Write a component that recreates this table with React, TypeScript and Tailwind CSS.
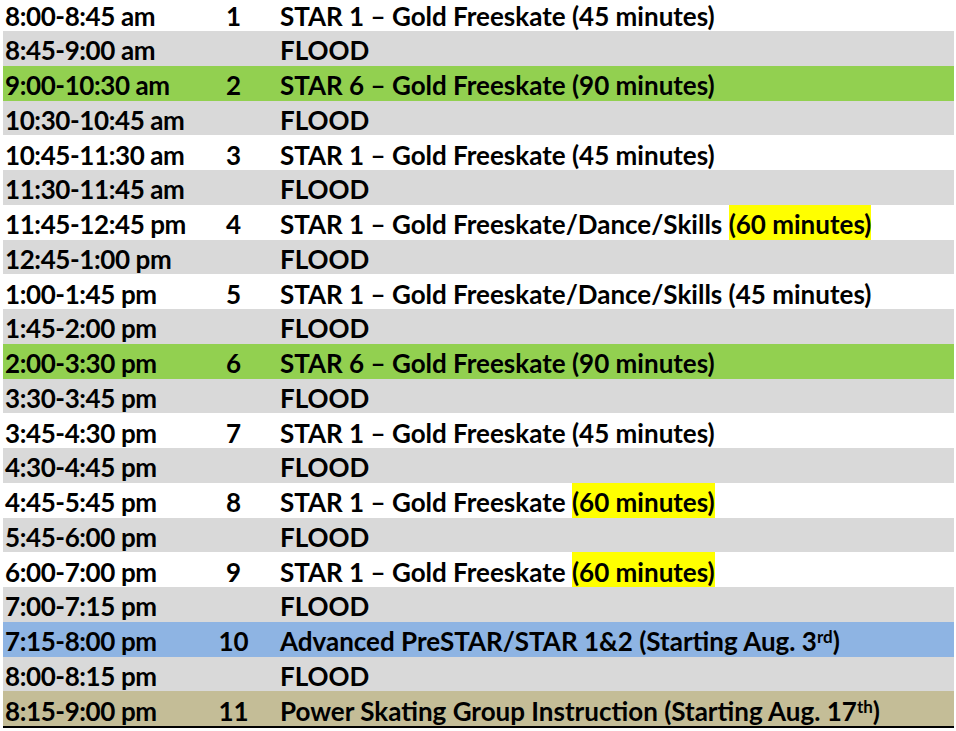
import React from 'react'

type Row = {
  time: string
  num?: string
  desc: React.ReactNode
  bg: string
}

const Hi = ({ children }: { children: React.ReactNode }) => (
  <span className="bg-[#ffff00] self-stretch flex items-center pt-[4px]">{children}</span>
)

const Sup = ({ children }: { children: React.ReactNode }) => (
  <span className="text-[17px] relative top-[-8px]">{children}</span>
)

const rows: Row[] = [
  { time: '8:00-8:45 am', num: '1', desc: 'STAR 1 – Gold Freeskate (45 minutes)', bg: 'bg-white' },
  { time: '8:45-9:00 am', desc: 'FLOOD', bg: 'bg-[#d9d9d9]' },
  { time: '9:00-10:30 am', num: '2', desc: 'STAR 6 – Gold Freeskate (90 minutes)', bg: 'bg-[#92d050]' },
  { time: '10:30-10:45 am', desc: 'FLOOD', bg: 'bg-[#d9d9d9]' },
  { time: '10:45-11:30 am', num: '3', desc: 'STAR 1 – Gold Freeskate (45 minutes)', bg: 'bg-white' },
  { time: '11:30-11:45 am', desc: 'FLOOD', bg: 'bg-[#d9d9d9]' },
  {
    time: '11:45-12:45 pm',
    num: '4',
    desc: (
      <>
        <span className="pt-[4px]">STAR 1 – Gold Freeskate/Dance/Skills&nbsp;</span>
        <Hi>(60 minutes)</Hi>
      </>
    ),
    bg: 'bg-white',
  },
  { time: '12:45-1:00 pm', desc: 'FLOOD', bg: 'bg-[#d9d9d9]' },
  { time: '1:00-1:45 pm', num: '5', desc: 'STAR 1 – Gold Freeskate/Dance/Skills (45 minutes)', bg: 'bg-white' },
  { time: '1:45-2:00 pm', desc: 'FLOOD', bg: 'bg-[#d9d9d9]' },
  { time: '2:00-3:30 pm', num: '6', desc: 'STAR 6 – Gold Freeskate (90 minutes)', bg: 'bg-[#92d050]' },
  { time: '3:30-3:45 pm', desc: 'FLOOD', bg: 'bg-[#d9d9d9]' },
  { time: '3:45-4:30 pm', num: '7', desc: 'STAR 1 – Gold Freeskate (45 minutes)', bg: 'bg-white' },
  { time: '4:30-4:45 pm', desc: 'FLOOD', bg: 'bg-[#d9d9d9]' },
  {
    time: '4:45-5:45 pm',
    num: '8',
    desc: (
      <>
        <span className="pt-[4px]">STAR 1 – Gold Freeskate&nbsp;</span>
        <Hi>(60 minutes)</Hi>
      </>
    ),
    bg: 'bg-white',
  },
  { time: '5:45-6:00 pm', desc: 'FLOOD', bg: 'bg-[#d9d9d9]' },
  {
    time: '6:00-7:00 pm',
    num: '9',
    desc: (
      <>
        <span className="pt-[4px]">STAR 1 – Gold Freeskate&nbsp;</span>
        <Hi>(60 minutes)</Hi>
      </>
    ),
    bg: 'bg-white',
  },
  { time: '7:00-7:15 pm', desc: 'FLOOD', bg: 'bg-[#d9d9d9]' },
  {
    time: '7:15-8:00 pm',
    num: '10',
    desc: (
      <span className="pt-[4px]">
        Advanced PreSTAR/STAR 1&amp;2 (Starting Aug. 3<Sup>rd</Sup>)
      </span>
    ),
    bg: 'bg-[#8eb4e3]',
  },
  { time: '8:00-8:15 pm', desc: 'FLOOD', bg: 'bg-[#d9d9d9]' },
  {
    time: '8:15-9:00 pm',
    num: '11',
    desc: (
      <span className="pt-[4px]">
        Power Skating Group Instruction (Starting Aug. 17<Sup>th</Sup>)
      </span>
    ),
    bg: 'bg-[#c4bd97]',
  },
]

export default function App() {
  return (
    <div className="w-[956px] h-[731px] bg-white overflow-hidden font-['Lato',sans-serif] font-bold text-[26px] text-black">
      <div className="ml-[3px] w-[951px] flex flex-col border-b-2 border-black">
        {rows.map((r, i) => (
          <div
            key={i}
            className={`flex items-center leading-none ${i === 0 ? 'h-[31px] pb-[4px]' : 'h-[34.75px]'} ${r.bg}`}
          >
            <div className="w-[190px] pl-[2px] pt-[4px] tracking-[-0.4px]">{r.time}</div>
            <div className="w-[81px] text-center pt-[4px]">{r.num}</div>
            <div className="flex-1 flex self-stretch items-center pl-[6px]">
              {typeof r.desc === 'string' ? <span className="pt-[4px]">{r.desc}</span> : r.desc}
            </div>
          </div>
        ))}
      </div>
    </div>
  )
}
